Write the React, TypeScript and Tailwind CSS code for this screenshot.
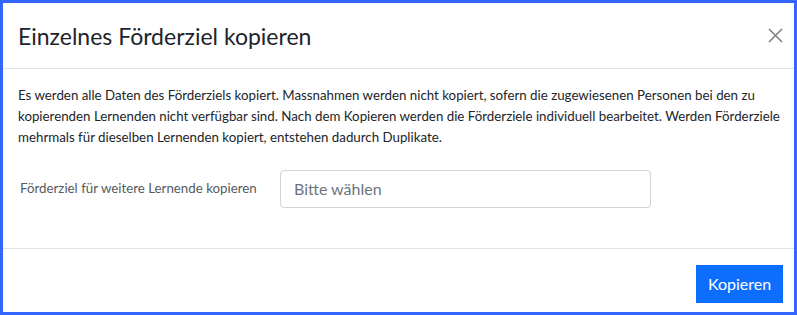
import React from "react";

export default function App() {
  return (
    <div className="w-[797px] h-[315px] border-[3px] border-[#3366ff] bg-white flex flex-col font-['Lato',sans-serif] text-[#212529] overflow-hidden">
      <div className="h-[66px] flex items-center justify-between pl-[15px] pr-[11px] border-b border-[#dee2e6] shrink-0">
        <h1 className="text-[23px] leading-[36px] font-normal">Einzelnes Förderziel kopieren</h1>
        <button className="w-[15px] h-[15px] flex items-center justify-center text-[#808080]">
          <svg width="15" height="15" viewBox="0 0 15 15">
            <path d="M1 1 L14 14 M14 1 L1 14" stroke="currentColor" strokeWidth="1.6" fill="none" />
          </svg>
        </button>
      </div>
      <div className="flex-1 px-[15px] pt-[16px]">
        <p className="text-[13.3px] leading-[21px] whitespace-nowrap">
          Es werden alle Daten des Förderziels kopiert. Massnahmen werden nicht kopiert, sofern die zugewiesenen Personen bei den zu
          <br />
          kopierenden Lernenden nicht verfügbar sind. Nach dem Kopieren werden die Förderziele individuell bearbeitet. Werden Förderziele
          <br />
          mehrmals für dieselben Lernenden kopiert, entstehen dadurch Duplikate.
        </p>
        <div className="flex items-center mt-[22px]">
          <label className="w-[262px] pl-[2px] text-[13.3px] text-[#555b61]">Förderziel für weitere Lernende kopieren</label>
          <div className="w-[371px] h-[38px] border border-[#ced4da] rounded-[4px] flex items-center px-[13px] text-[16px] text-[#6c757d]">
            Bitte wählen
          </div>
        </div>
      </div>
      <div className="h-[64px] border-t border-[#dee2e6] flex items-start justify-end pt-[16px] pr-[11px] shrink-0">
        <button className="w-[87px] h-[38px] bg-[#0d6efd] text-white text-[16px] flex items-center justify-center">
          Kopieren
        </button>
      </div>
    </div>
  );
}
